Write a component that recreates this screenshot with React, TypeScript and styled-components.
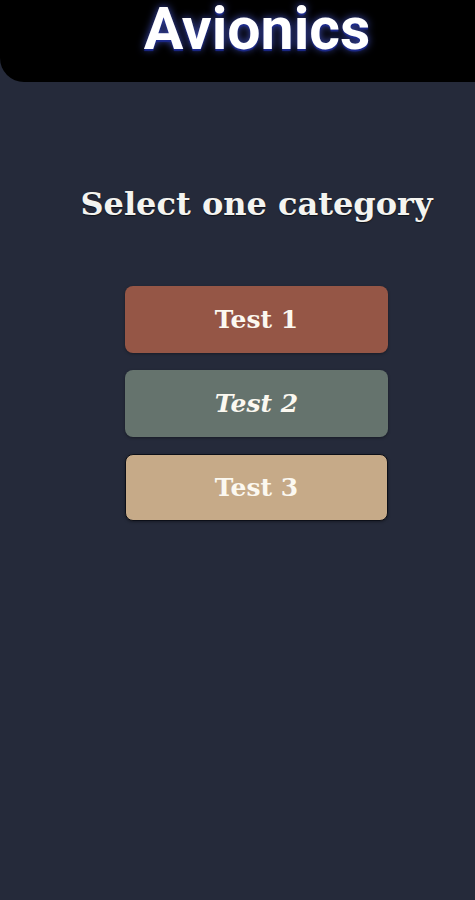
import React from "react";
import styled, { createGlobalStyle } from "styled-components";

const Global = createGlobalStyle`
  html, body { margin: 0; padding: 0; background: #252a3a; }
  body { width: 475px; min-height: 900px; }
`;

const Page = styled.div`
  width: 475px;
  min-height: 900px;
  background: #252a3a;
  display: flex;
  flex-direction: column;
`;

const Header = styled.header`
  height: 82px;
  background: #000;
  border-bottom-left-radius: 24px;
  display: flex;
  justify-content: center;
  align-items: flex-start;
`;

const Title = styled.h1`
  margin: 0;
  margin-left: 39px;
  font-family: Roboto, "Liberation Sans", sans-serif;
  font-weight: 700;
  font-size: 59px;
  line-height: 58px;
  color: #fff;
  text-shadow: 0 2px 1px #1c2a8c, 0 0 8px rgba(90, 110, 255, 0.75);
`;

const Content = styled.main`
  display: flex;
  flex-direction: column;
  align-items: center;
  padding-left: 38px;
  padding-top: 98px;
`;

const Prompt = styled.h2`
  margin: 0;
  font-family: "DejaVu Serif", "Liberation Serif", serif;
  font-weight: 700;
  font-size: 32px;
  line-height: 48px;
  color: #f4f4f0;
  text-shadow: 0 1px 1px rgba(0, 0, 0, 0.6);
`;

const List = styled.div`
  margin-top: 58px;
  display: flex;
  flex-direction: column;
  gap: 17px;
`;

const Button = styled.button<{ $bg: string; $italic?: boolean; $outline?: boolean }>`
  width: 263px;
  height: 67px;
  border-radius: 8px;
  border: 1px solid ${(p) => (p.$outline ? "#0c0f18" : "transparent")};
  background: ${(p) => p.$bg};
  color: #fbf8f0;
  font-family: "DejaVu Serif", "Liberation Serif", serif;
  font-weight: 700;
  font-style: ${(p) => (p.$italic ? "italic" : "normal")};
  font-size: 25px;
  display: flex;
  align-items: center;
  justify-content: center;
  box-shadow: 0 1px 3px rgba(0, 0, 0, 0.35);
  cursor: pointer;
  padding: 0;
`;

export default function App() {
  return (
    <Page>
      <Global />
      <Header>
        <Title>Avionics</Title>
      </Header>
      <Content>
        <Prompt>Select one category</Prompt>
        <List>
          <Button $bg="#955646">Test 1</Button>
          <Button $bg="#65736d" $italic>Test 2</Button>
          <Button $bg="#c6aa88" $outline>Test 3</Button>
        </List>
      </Content>
    </Page>
  );
}
